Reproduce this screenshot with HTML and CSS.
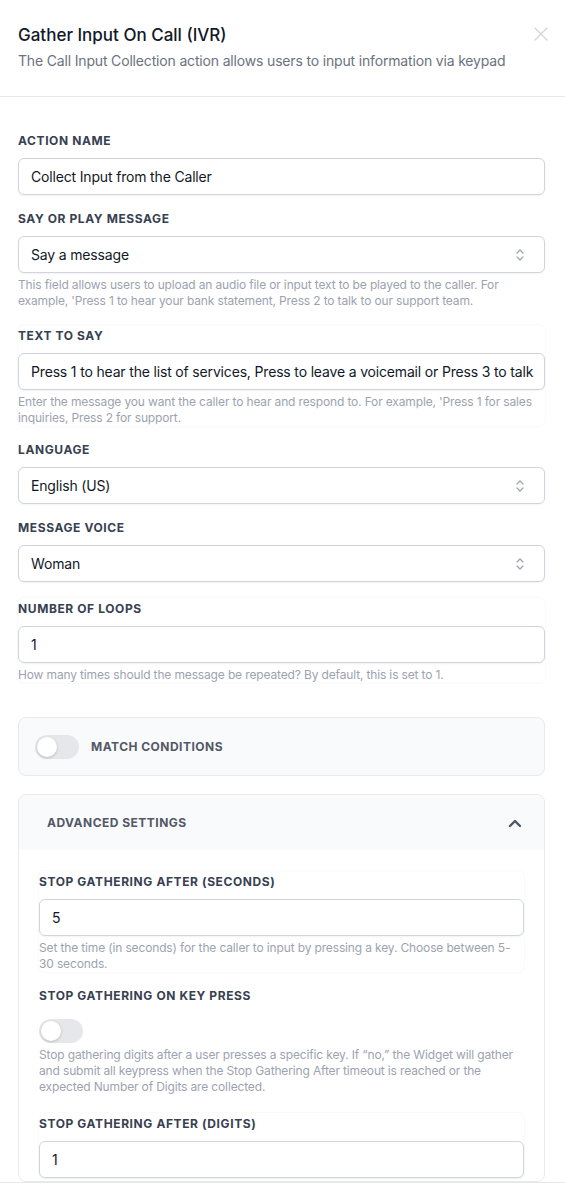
FILE: index.html
```html
<!DOCTYPE html>
<html lang="en">
<head>
<meta charset="utf-8">
<title>Gather Input On Call (IVR)</title>
<link rel="stylesheet" href="styles.css">
</head>
<body>
<div class="drawer">
  <header class="head">
    <div class="head-text">
      <h1 class="title">Gather Input On Call (IVR)</h1>
      <p class="subtitle">The Call Input Collection action allows users to input information via keypad</p>
    </div>
    <button class="close" aria-label="Close">
      <svg viewBox="0 0 16 16" width="16" height="16"><path d="M2 2L14 14M14 2L2 14" stroke="#d1d5db" stroke-width="1.3" fill="none" stroke-linecap="round"/></svg>
    </button>
  </header>

  <main class="content">
    <div class="field">
      <label class="label">Action Name</label>
      <div class="input">Collect Input from the Caller</div>
    </div>

    <div class="field">
      <label class="label">Say or Play Message</label>
      <div class="input select">Say a message<svg class="updown" viewBox="0 0 10 16" width="10" height="16"><path d="M2 6L5 3L8 6M2 10L5 13L8 10" stroke="#9ca3af" stroke-width="1.2" fill="none" stroke-linecap="round" stroke-linejoin="round"/></svg></div>
      <p class="help">This field allows users to upload an audio file or input text to be played to the caller. For example, 'Press 1 to hear your bank statement, Press 2 to talk to our support team.</p>
    </div>

    <div class="field boxed">
      <label class="label">Text to Say</label>
      <div class="input">Press 1 to hear the list of services, Press to leave a voicemail or Press 3 to talk</div>
      <p class="help">Enter the message you want the caller to hear and respond to. For example, 'Press 1 for sales inquiries, Press 2 for support.</p>
    </div>

    <div class="field">
      <label class="label">Language</label>
      <div class="input select">English (US)<svg class="updown" viewBox="0 0 10 16" width="10" height="16"><path d="M2 6L5 3L8 6M2 10L5 13L8 10" stroke="#9ca3af" stroke-width="1.2" fill="none" stroke-linecap="round" stroke-linejoin="round"/></svg></div>
    </div>

    <div class="field">
      <label class="label">Message Voice</label>
      <div class="input select">Woman<svg class="updown" viewBox="0 0 10 16" width="10" height="16"><path d="M2 6L5 3L8 6M2 10L5 13L8 10" stroke="#9ca3af" stroke-width="1.2" fill="none" stroke-linecap="round" stroke-linejoin="round"/></svg></div>
    </div>

    <div class="field boxed">
      <label class="label">Number of Loops</label>
      <div class="input">1</div>
      <p class="help">How many times should the message be repeated? By default, this is set to 1.</p>
    </div>

    <section class="card match">
      <span class="toggle"><span class="knob"></span></span>
      <span class="card-title">Match Conditions</span>
    </section>

    <section class="card adv">
      <div class="adv-head">
        <span class="card-title">Advanced Settings</span>
        <svg viewBox="0 0 14 10" width="14" height="10"><path d="M2 8L7 3L12 8" stroke="#4b5563" stroke-width="2.4" fill="none" stroke-linecap="round" stroke-linejoin="round"/></svg>
      </div>
      <div class="adv-body">
        <div class="field boxed">
          <label class="label">Stop Gathering After (Seconds)</label>
          <div class="input">5</div>
          <p class="help">Set the time (in seconds) for the caller to input by pressing a key. Choose between 5-30 seconds.</p>
        </div>

        <div class="field toggle-field">
          <label class="label">Stop Gathering On Key Press</label>
          <span class="toggle key"><span class="knob"></span></span>
          <p class="help">Stop gathering digits after a user presses a specific key. If “no,” the Widget will gather and submit all keypress when the Stop Gathering After timeout is reached or the expected Number of Digits are collected.</p>
        </div>

        <div class="field boxed">
          <label class="label">Stop Gathering After (Digits)</label>
          <div class="input">1</div>
        </div>
      </div>
    </section>
  </main>

  <footer class="foot"></footer>
</div>
</body>
</html>
```

FILE: styles.css
```css
* { box-sizing: border-box; }

html, body {
  margin: 0;
  padding: 0;
  background: #ffffff;
}

body {
  font-family: Inter, "Noto Sans", "Liberation Sans", sans-serif;
  color: #111827;
}

.drawer {
  height: 100vh;
  display: flex;
  flex-direction: column;
  overflow: hidden;
}

.head {
  flex: 0 0 auto;
  display: flex;
  justify-content: space-between;
  align-items: flex-start;
  padding: 23px 16px 0 18px;
  height: 97px;
  border-bottom: 1px solid #e5e7eb;
}

.title {
  margin: 0;
  font-size: 17px;
  line-height: 24px;
  font-weight: 500;
  color: #111827;
}

.subtitle {
  margin: 4px 0 0;
  font-size: 14px;
  line-height: 20px;
  letter-spacing: -0.012em;
  color: #6b7280;
}

.close {
  border: 0;
  background: none;
  padding: 0;
  margin-top: 3px;
  width: 16px;
  height: 16px;
  display: flex;
}

.content {
  flex: 1 1 auto;
  overflow: hidden;
  padding: 36px 20px 0 18px;
  display: flex;
  flex-direction: column;
}

.field {
  display: flex;
  flex-direction: column;
  margin-bottom: 16px;
}

.toggle-field {
  margin-bottom: 18px;
}

.boxed {
  padding-top: 3px;
  border-radius: 6px;
  box-shadow: 0 0 0 1px rgba(17, 24, 39, 0.025);
}

.label {
  font-size: 12px;
  line-height: 16px;
  font-weight: 700;
  text-transform: uppercase;
  letter-spacing: 0.05em;
  color: #374151;
  margin-bottom: 9px;
}

.input {
  height: 37px;
  border: 1px solid #d1d5db;
  border-radius: 6px;
  background: #fff;
  box-shadow: 0 1px 2px rgba(0, 0, 0, 0.05);
  padding: 0 12px;
  font-size: 14px;
  line-height: 35px;
  letter-spacing: -0.012em;
  color: #111827;
  white-space: nowrap;
  overflow: hidden;
}

.select {
  display: flex;
  justify-content: space-between;
  align-items: center;
  padding-right: 19px;
}

.updown { flex: 0 0 auto; }

.help {
  margin: 4px 0 0;
  font-size: 12px;
  line-height: 16px;
  letter-spacing: -0.012em;
  color: #9ca3af;
}

.card {
  border: 1px solid #e9eaee;
  border-radius: 8px;
  background: #f9fafb;
}

.card-title {
  font-size: 12px;
  line-height: 16px;
  font-weight: 700;
  text-transform: uppercase;
  letter-spacing: 0.04em;
  color: #525866;
}

.match {
  margin-top: 18px;
  height: 61px;
  display: flex;
  align-items: center;
  gap: 12px;
  padding: 0 16px;
}

.toggle {
  width: 44px;
  height: 24px;
  border-radius: 12px;
  background: #e5e7eb;
  padding: 2px;
  display: flex;
  flex: 0 0 auto;
}

.knob {
  width: 20px;
  height: 20px;
  border-radius: 50%;
  background: #fff;
  box-shadow: 0 1px 3px rgba(0, 0, 0, 0.2);
}

.toggle.key {
  margin-top: 6px;
}

.adv {
  margin-top: 18px;
  background: #fff;
  overflow: hidden;
}

.adv-head {
  height: 55px;
  background: #f9fafb;
  display: flex;
  align-items: center;
  justify-content: space-between;
  padding: 0 22px 0 28px;
}

.adv-body {
  padding: 21px 20px 0 20px;
}

.foot {
  flex: 0 0 7px;
  border-top: 1px solid #e5e7eb;
  background: #fff;
}
```
